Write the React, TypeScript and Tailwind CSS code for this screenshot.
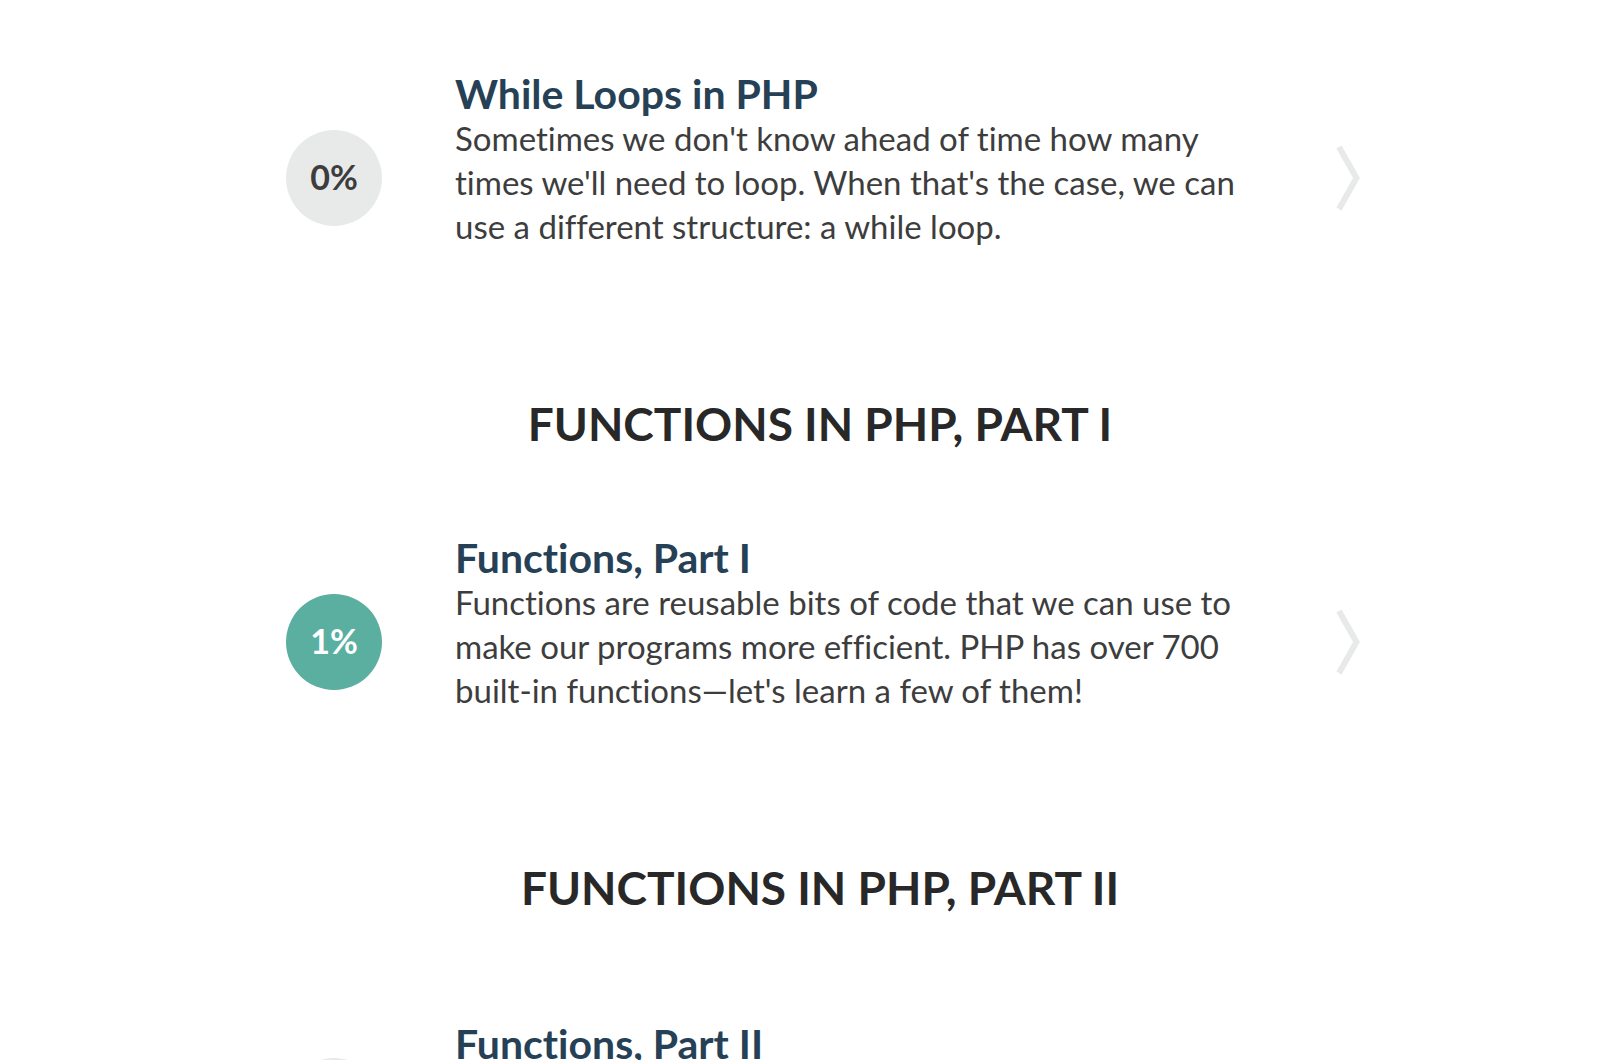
type Lesson = {
  title: string;
  description: string;
  percent: number;
};

type Section = {
  heading?: string;
  lesson: Lesson;
};

const sections: Section[] = [
  {
    lesson: {
      title: "While Loops in PHP",
      description:
        "Sometimes we don't know ahead of time how many times we'll need to loop. When that's the case, we can use a different structure: a while loop.",
      percent: 0,
    },
  },
  {
    heading: "Functions in PHP, Part I",
    lesson: {
      title: "Functions, Part I",
      description:
        "Functions are reusable bits of code that we can use to make our programs more efficient. PHP has over 700 built-in functions—let's learn a few of them!",
      percent: 1,
    },
  },
  {
    heading: "Functions in PHP, Part II",
    lesson: {
      title: "Functions, Part II",
      description: "Learn how to write your own functions in PHP and put them to work.",
      percent: 0,
    },
  },
];

function ProgressBadge({ percent }: { percent: number }) {
  const tone = percent > 0 ? "bg-[#5bafa0] text-white" : "bg-[#e8eaea] text-[#3d3d3d]";
  return (
    <span className={`flex size-24 shrink-0 items-center justify-center rounded-full pb-0.5 text-[34px] leading-[44px] font-bold ${tone}`}>
      {percent}%
    </span>
  );
}

function Chevron() {
  return (
    <svg className="h-[66px] w-6 shrink-0" viewBox="0 0 24 66" fill="none" aria-hidden="true">
      <path d="M3 2 L20.5 33 L3 64" stroke="#e8eaea" strokeWidth="6" />
    </svg>
  );
}

function LessonRow({ lesson }: { lesson: Lesson }) {
  return (
    <a href="#lesson" className="flex min-h-[210px] items-center pl-[6px]">
      <ProgressBadge percent={lesson.percent} />
      <div className="ml-[73px] min-w-0 max-w-[790px] flex-1 pb-[35px]">
        <h3 className="pb-px text-[41px] leading-[42px] font-bold text-[#264156]">{lesson.title}</h3>
        <p className="text-[33px] leading-[44px] text-[#3d3d3d]">{lesson.description}</p>
      </div>
      <div className="ml-auto">
        <Chevron />
      </div>
    </a>
  );
}

export default function App() {
  return (
    <div className="min-h-screen bg-white pl-4 font-['Lato',sans-serif] [font-variant-ligatures:none]">
      <main className="mx-auto max-w-[1080px] pt-[73px]">
        {sections.map(({ heading, lesson }) => (
          <section key={lesson.title}>
            {heading && (
              <h2 className="mt-[109px] mb-[81px] text-center text-[46px] leading-[64px] font-bold text-[#282828] uppercase">
                {heading}
              </h2>
            )}
            <LessonRow lesson={lesson} />
          </section>
        ))}
      </main>
    </div>
  );
}
